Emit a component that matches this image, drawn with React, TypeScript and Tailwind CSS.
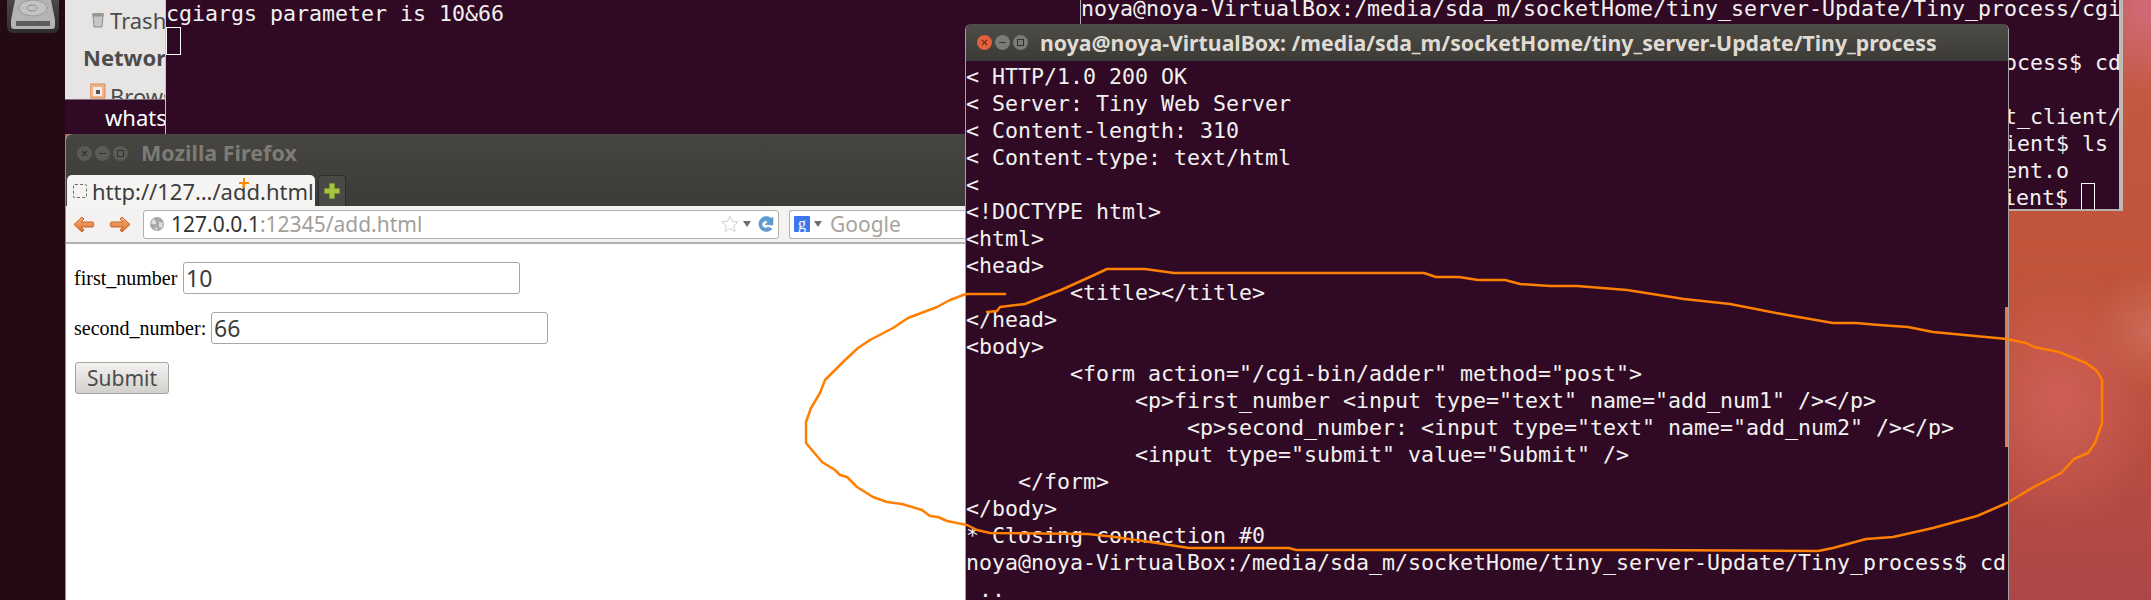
import React from "react";

const mono = "font-['DejaVu_Sans_Mono',monospace] text-[21.6px] leading-[27px] whitespace-pre text-[#f2f1f0]";
const ui = "font-['Noto_Sans','Open_Sans',sans-serif]";

const term2 = [
  "< HTTP/1.0 200 OK",
  "< Server: Tiny Web Server",
  "< Content-length: 310",
  "< Content-type: text/html",
  "< ",
  "<!DOCTYPE html>",
  "<html>",
  "<head>",
  "        <title></title>",
  "</head>",
  "<body>",
  "        <form action=\"/cgi-bin/adder\" method=\"post\">",
  "             <p>first_number <input type=\"text\" name=\"add_num1\" /></p>",
  "                 <p>second_number: <input type=\"text\" name=\"add_num2\" /></p>",
  "             <input type=\"submit\" value=\"Submit\" />",
  "    </form>",
  "</body>",
  "* Closing connection #0",
  "noya@noya-VirtualBox:/media/sda_m/socketHome/tiny_server-Update/Tiny_process$ cd",
  " ..",
];

const curve =
  "M1005,294 L966,294 950,300 937,307 908,318 893,328 870,340 858,348 843,362 825,380 820,393 811,408 806,422 806,443 822,462 835,470 840,475 847,477 857,487 873,497 887,502 902,504 922,510 930,516 938,517 947,521 967,525 977,530 990,533 1088,534 1115,537 1157,543 1189,548 1289,548 1296,550 1640,550 1818,551 1833,548 1866,539 1893,537 1933,528 1977,516 2007,503 2032,488 2061,473 2074,459 2088,453 2095,443 2102,423 2102,380 2097,371 2086,363 2059,352 2034,347 2026,343 2007,339 1933,332 1908,327 1879,325 1856,323 1833,323 1787,315 1730,304 1684,299 1627,290 1577,286 1550,286 1520,284 1505,280 1478,280 1459,277 1436,277 1424,273 1174,273 1145,269 1107,269 1092,276 1061,290 1040,298 1030,302 1025,304 1000,307 997,311 987,312";

function WindowDots({ focused }: { focused: boolean }) {
  return (
    <div className="flex items-center gap-[3px]">
      <span className={`flex h-[15px] w-[15px] items-center justify-center rounded-full ${focused ? "bg-[#e2603a]" : "bg-[#5b5a55]"}`}>
        <svg width="7" height="7" viewBox="0 0 7 7">
          <path d="M1 1 L6 6 M6 1 L1 6" stroke={focused ? "#7a2a12" : "#33322e"} strokeWidth="1.2" />
        </svg>
      </span>
      <span className={`flex h-[15px] w-[15px] items-center justify-center rounded-full ${focused ? "bg-[#7b7a74]" : "bg-[#5b5a55]"}`}>
        <span className="h-[1px] w-[7px] bg-[#33322e]" />
      </span>
      <span className={`flex h-[15px] w-[15px] items-center justify-center rounded-full ${focused ? "bg-[#7b7a74]" : "bg-[#5b5a55]"}`}>
        <span className="h-[7px] w-[7px] border border-[#33322e]" />
      </span>
    </div>
  );
}

function Arrow({ flip }: { flip?: boolean }) {
  return (
    <svg width="22" height="17" viewBox="0 0 22 17" className={flip ? "-scale-x-100" : ""}>
      <defs>
        <linearGradient id={flip ? "agf" : "agb"} x1="0" y1="0" x2="0" y2="1">
          <stop offset="0" stopColor="#f6b27a" />
          <stop offset="1" stopColor="#e06c2c" />
        </linearGradient>
      </defs>
      <path
        d="M9 1 L1 8.5 L9 16 L11 14 L8 11 L20 11 Q21.5 8.5 20 6 L8 6 L11 3 Z"
        fill={`url(#${flip ? "agf" : "agb"})`}
        stroke="#c9622a"
        strokeWidth="1"
        strokeLinejoin="round"
      />
    </svg>
  );
}

function Caret() {
  return <span className="h-0 w-0 border-x-[4px] border-t-[6px] border-x-transparent border-t-[#6e6e6e]" />;
}

export default function App() {
  return (
    <div className="relative flex h-[600px] w-[2151px] overflow-hidden bg-[radial-gradient(ellipse_70px_90px_at_2145px_10px,#d06a78,transparent),radial-gradient(ellipse_100px_130px_at_2060px_400px,#cf5f56,transparent),radial-gradient(ellipse_60px_60px_at_2150px_330px,#cb6a58,transparent),linear-gradient(180deg,#c55a42_0%,#bf5239_55%,#ad4648_100%)]">
      {/* launcher */}
      <aside className="flex h-full w-[65px] shrink-0 flex-col items-center bg-[#230a14]">
        <div className="flex h-[33px] w-[52px] items-end justify-center rounded-b-[6px] bg-gradient-to-b from-[#4a4a48] to-[#302c2d] pb-[4px]">
          <svg width="46" height="29" viewBox="0 0 46 29">
            <path d="M5 0 L41 0 L45 20 L45 26 Q45 29 42 29 L4 29 Q1 29 1 26 L1 20 Z" fill="#b4b4b2" />
            <ellipse cx="23" cy="8" rx="14" ry="8" fill="#c2c2c0" stroke="#9a9a98" />
            <ellipse cx="22" cy="8" rx="5" ry="3" fill="none" stroke="#8f8f8d" />
            <rect x="6" y="21" width="34" height="5" fill="#5c5c5c" />
          </svg>
        </div>
      </aside>

      {/* nautilus behind */}
      <section className="absolute left-[65px] top-0 z-10 flex h-[134px] w-[101px] flex-col overflow-hidden border-r border-[#c9c4c6]">
        <div className={`flex h-[99px] flex-col bg-[#e6e5e3] text-[22px] text-[#4c4c4c] ${ui}`}>
          <div className="flex h-[40px] items-center gap-[6px] whitespace-nowrap pl-[27px]">
            <svg width="12" height="16" viewBox="0 0 12 16" className="shrink-0">
              <rect x="0" y="1" width="12" height="3" rx="1" fill="#9a9a98" />
              <path d="M1 4 L11 4 L10 15 L2 15 Z" fill="#c6c6c4" stroke="#8e8e8c" />
            </svg>
            <span>Trash</span>
          </div>
          <div className="flex h-[34px] items-center whitespace-nowrap pl-[18px] font-bold">Network</div>
          <div className="flex h-[25px] items-start gap-[4px] overflow-hidden whitespace-nowrap pl-[25px] pt-[9px] leading-[26px]">
            <svg width="16" height="16" viewBox="0 0 16 16" className="shrink-0">
              <path d="M0 1 L15 1 L15 15 L0 15 Z" fill="#eeb58c" stroke="#d08a5a" />
              <rect x="3" y="4" width="9" height="9" fill="#f4ece4" />
              <rect x="6" y="7" width="4" height="4" fill="#555" />
            </svg>
            <span>Browse Network</span>
          </div>
        </div>
        <div className={`flex h-[35px] items-center whitespace-nowrap border-t border-[#7d6a76] bg-[#300a24] pl-[40px] text-[22px] text-white ${ui}`}>whatsapp</div>
      </section>

      {/* terminal behind, left */}
      <section className="absolute left-[166px] top-0 z-10 h-[134px] w-[920px] bg-[#300a24]">
        <div className={mono}>cgiargs parameter is 10&amp;66</div>
        <span className="block h-[28px] w-[15px] border border-white" />
      </section>

      {/* terminal behind, right */}
      <section className="absolute left-[1080px] top-0 z-10 flex h-[211px] w-[1043px] border-b-[2px] border-l border-[#b4b1ae] bg-[#300a24]">
        <div className="flex-1 overflow-hidden">
          <div className="-mt-[5px] w-[1040px]">
            <div className={`${mono} h-[27px]`}>noya@noya-VirtualBox:/media/sda_m/socketHome/tiny_server-Update/Tiny_process/cgi</div>
            <div className="h-[27px]" />
            <div className={`${mono} h-[27px] text-right`}>ocess$ cd</div>
            <div className="h-[27px]" />
            <div className={`${mono} h-[27px] text-right`}>t_client/</div>
            <div className={`${mono} h-[27px] pr-[13px] text-right`}>ient$ ls</div>
            <div className={`${mono} h-[27px] pr-[52px] text-right`}>ent.o</div>
            <div className={`${mono} flex h-[27px] justify-end pr-[26px]`}>
              <span>ient$ </span>
              <span className="mt-[-1px] block h-[28px] w-[14px] border border-white" />
            </div>
          </div>
        </div>
        <div className="w-[4px] bg-[#bdbab7]" />
      </section>

      {/* firefox */}
      <section className="absolute bottom-0 left-[65px] top-[134px] z-20 flex w-[960px] flex-col rounded-t-[6px] border-l border-[#8f8f8f] bg-white">
        <header className="flex h-[72px] flex-col rounded-t-[6px] bg-gradient-to-b from-[#464541] to-[#3c3b37]">
          <div className="mb-[3px] flex h-[38px] items-center pl-[11px]">
            <WindowDots focused={false} />
            <h1 className={`ml-[13px] text-[21.5px] font-bold leading-none text-[#7d7b75] ${ui}`}>Mozilla Firefox</h1>
          </div>
          <div className="flex h-[31px] gap-[3px] pl-[1px]">
            <div className="flex w-[248px] items-center rounded-t-[5px] bg-[#f5f4f2] pl-[6px]">
              <span className="h-[14px] w-[14px] shrink-0 rounded-[2px] border border-dashed border-[#6b6b6b]" />
              <span className={`ml-[5px] whitespace-nowrap text-[22px] leading-none text-[#3c3c3c] ${ui}`}>http://127…/add.html</span>
            </div>
            <div className="flex w-[28px] items-center justify-center rounded-t-[4px] border border-b-0 border-[#2f2e2b] bg-[#4a4945]">
              <svg width="16" height="16" viewBox="0 0 16 16">
                <path d="M5.5 0.5 H10.5 V5.5 H15.5 V10.5 H10.5 V15.5 H5.5 V10.5 H0.5 V5.5 H5.5 Z" fill="#a4c43c" stroke="#7f9a2c" strokeWidth="0.6" />
              </svg>
            </div>
          </div>
        </header>
        <nav className="flex h-[38px] items-center border-b-[2px] border-[#b3b1ad] bg-[#f3f2f0] pl-[7px]">
          <Arrow />
          <span className="w-[14px]" />
          <Arrow flip />
          <div className={`ml-[12px] flex h-[29px] w-[636px] items-center rounded-[3px] border border-[#b5b1aa] bg-white pl-[6px] pr-[4px] text-[21px] ${ui}`}>
            <svg width="14" height="14" viewBox="0 0 14 14" className="shrink-0">
              <circle cx="7" cy="7" r="7" fill="#a8a8a8" />
              <path d="M3 2 Q7 4 6 7 Q3 8 1 6 Z M9 5 L13 6 L12 11 L9 10 Z M5 10 L8 11 L6 14 Z" fill="#dedede" />
            </svg>
            <span className="ml-[7px] whitespace-nowrap leading-none text-[#333]">127.0.0.1</span>
            <span className="flex-1 whitespace-nowrap leading-none text-[#a3a09b]">:12345/add.html</span>
            <svg width="18" height="18" viewBox="0 0 18 18" className="shrink-0">
              <path d="M9 1 L11.4 6.3 L17 7 L12.8 10.8 L14 16.6 L9 13.6 L4 16.6 L5.2 10.8 L1 7 L6.6 6.3 Z" fill="#fff" stroke="#d0d0cc" />
            </svg>
            <span className="ml-[4px] mr-[6px] flex"><Caret /></span>
            <svg width="17" height="17" viewBox="0 0 17 17" className="shrink-0">
              <path d="M15 3 A7.5 7.5 0 1 0 15 13 L11 11 A3.5 3.5 0 1 1 11 6 L8 8.5 L16 9 L16 1 L13.5 4 Z" fill="#5f9ad0" stroke="#4a84bc" strokeWidth="0.5" />
            </svg>
          </div>
          <div className={`ml-[10px] flex h-[29px] flex-1 items-center rounded-l-[3px] border border-r-0 border-[#b5b1aa] bg-white pl-[4px] text-[21px] text-[#a8a49e] ${ui}`}>
            <span className="flex h-[16px] w-[16px] items-center justify-center rounded-[1px] bg-[#3d77ec] font-['Liberation_Serif',serif] text-[16px] leading-none text-white">g</span>
            <span className="ml-[4px] mr-[8px] flex"><Caret /></span>
            <span className="leading-none">Google</span>
          </div>
        </nav>
        <main className="flex flex-1 flex-col bg-white pl-[8px] pt-[18px] font-['Liberation_Serif',serif] text-[20px] text-black">
          <div className="flex h-[32px] items-center">
            <span className="w-[109px] whitespace-nowrap">first_number</span>
            <span className={`flex h-[32px] w-[337px] items-center rounded-[3px] border border-[#aaa59f] pl-[2px] text-[23px] leading-none text-[#3c3c3c] ${ui}`}>10</span>
          </div>
          <div className="mt-[18px] flex h-[32px] items-center">
            <span className="w-[137px] whitespace-nowrap">second_number:</span>
            <span className={`flex h-[32px] w-[337px] items-center rounded-[3px] border border-[#aaa59f] pl-[2px] text-[23px] leading-none text-[#3c3c3c] ${ui}`}>66</span>
          </div>
          <button className={`ml-[1px] mt-[18px] h-[32px] w-[94px] rounded-[3px] border border-[#a7a39d] bg-gradient-to-b from-[#f4f3f2] to-[#d2d0cc] text-[21px] leading-none text-[#4c4c4c] ${ui}`}>Submit</button>
        </main>
      </section>

      {/* terminal front */}
      <section className="absolute bottom-0 left-[965px] top-[24px] z-30 flex w-[1044px] flex-col rounded-t-[6px] border-x border-[#a4a1a0] border-t-0 bg-[#300a24]">
        <header className="flex h-[37px] shrink-0 items-center rounded-t-[6px] bg-gradient-to-b from-[#4d4c47] to-[#3c3b37] pl-[11px]">
          <WindowDots focused />
          <h1 className={`ml-[12px] whitespace-nowrap text-[21.25px] font-bold leading-none text-[#dfdbd2] ${ui}`}>
            noya@noya-VirtualBox: /media/sda_m/socketHome/tiny_server-Update/Tiny_process
          </h1>
        </header>
        <div className="relative flex-1 overflow-hidden pt-[2px]">
          {term2.map((t, i) => (
            <div key={i} className={mono}>{t}</div>
          ))}
          <span className="absolute right-0 top-[246px] h-[140px] w-[3px] bg-[#e27a52]" />
        </div>
      </section>

      {/* hand-drawn annotation */}
      <svg className="pointer-events-none absolute left-0 top-0 z-40" width="2151" height="600" viewBox="0 0 2151 600" fill="none">
        <path d={curve} stroke="#ff7f00" strokeWidth="2.5" strokeLinejoin="round" strokeLinecap="round" />
        <path d="M244 178 V188 M239 183 H249" stroke="#ff8a00" strokeWidth="2" />
      </svg>
    </div>
  );
}
